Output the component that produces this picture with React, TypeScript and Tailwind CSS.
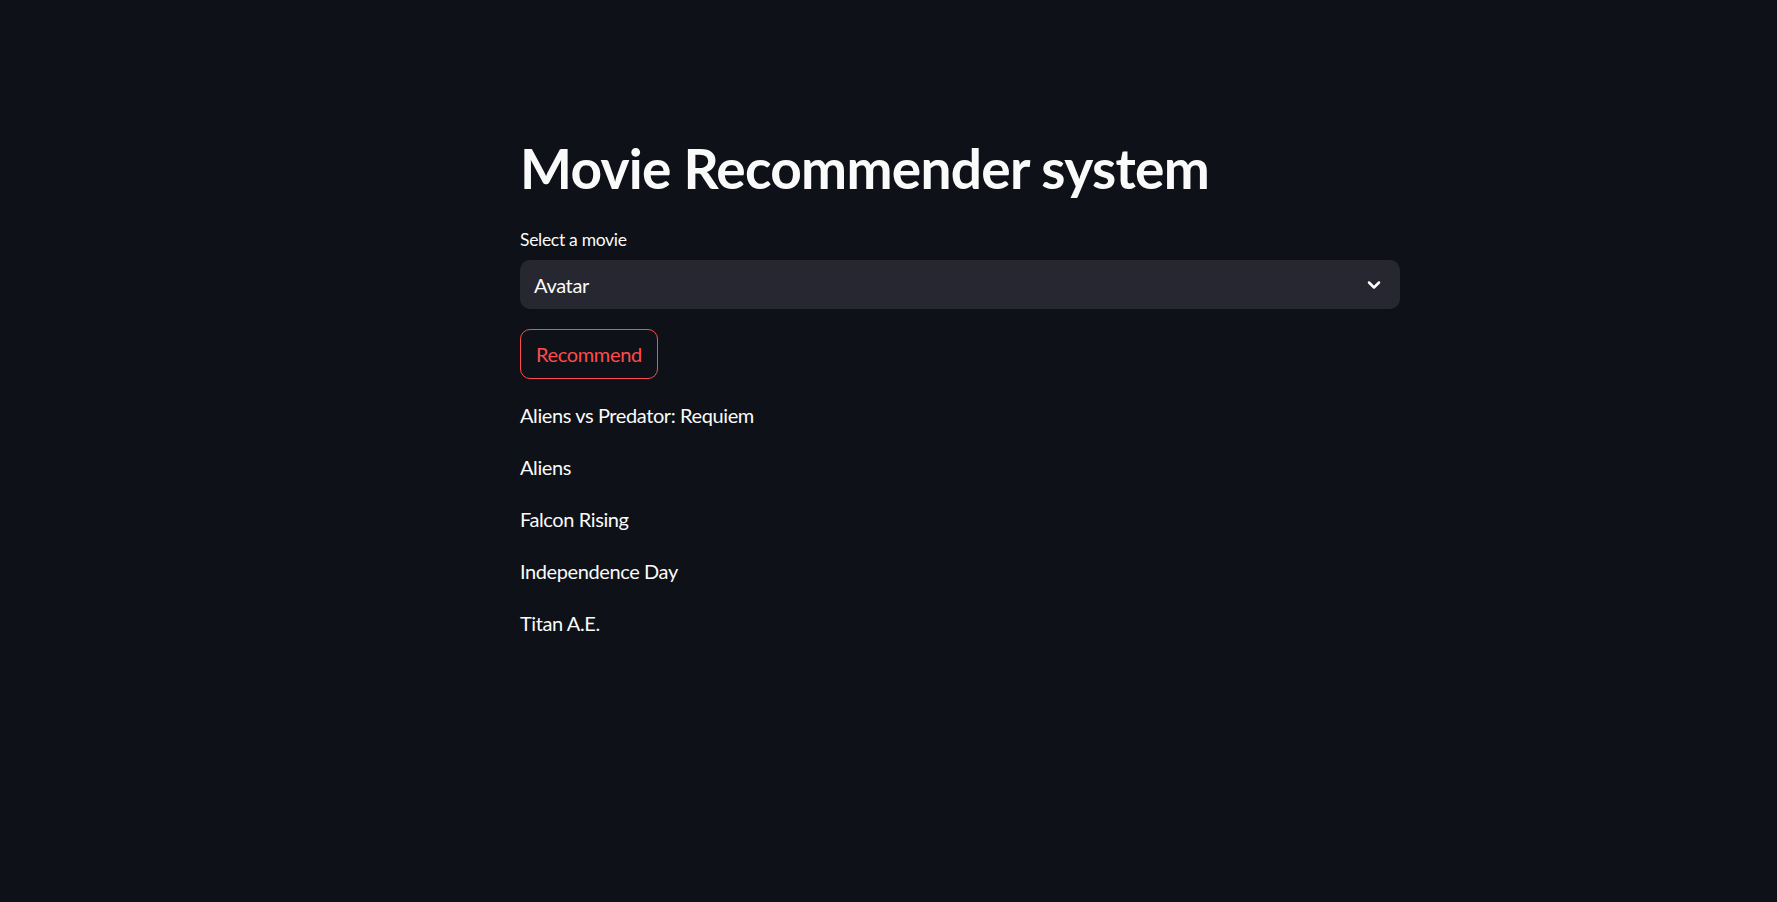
import { ChevronDown } from 'lucide-react'

const recommendations = [
  'Aliens vs Predator: Requiem',
  'Aliens',
  'Falcon Rising',
  'Independence Day',
  'Titan A.E.',
]

export default function App() {
  return (
    <div
      className="min-h-screen w-full bg-[#0e1117] text-[#fafafa]"
      style={{ fontFamily: '"Source Sans Pro", Lato, "Noto Sans", sans-serif' }}
    >
      <div className="ml-[520px] w-[880px] pt-[134px] flex flex-col">
        <h1 className="text-[55px] leading-[68px] font-bold tracking-[-0.7px]">Movie Recommender system</h1>

        <div className="mt-[25px] flex flex-col">
          <label className="text-[17.5px] leading-[26px] h-[30px] tracking-[-0.3px]">Select a movie</label>
          <div className="mt-[3px] h-[49px] rounded-[10px] bg-[#262730] flex items-center justify-between pl-[14px] pr-[16px]">
            <span className="text-[20px] tracking-[-0.35px]">Avatar</span>
            <ChevronDown className="w-[20px] h-[20px] text-white" strokeWidth={3} />
          </div>
        </div>

        <div className="mt-[20px]">
          <button className="h-[50px] px-[15px] rounded-[10px] border border-[#ff4b4b] text-[#ff4b4b] text-[20px] tracking-[-0.35px] bg-transparent">
            Recommend
          </button>
        </div>

        <div className="mt-[20px] flex flex-col gap-[20px]">
          {recommendations.map((m) => (
            <p key={m} className="text-[20px] leading-[32px] tracking-[-0.4px]">
              {m}
            </p>
          ))}
        </div>
      </div>
    </div>
  )
}
